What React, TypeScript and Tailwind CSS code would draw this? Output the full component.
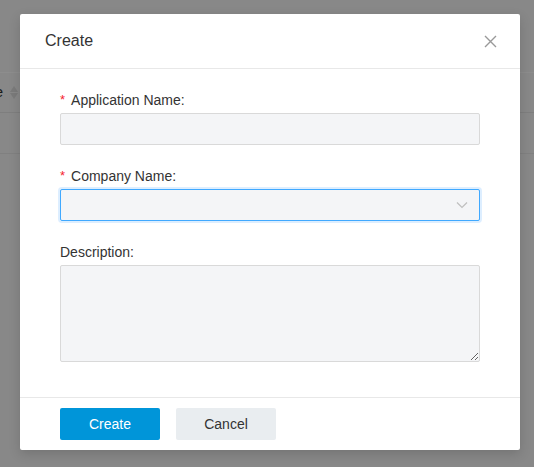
import React from 'react';

function ChevronDown() {
  return (
    <svg width="12" height="8" viewBox="0 0 12 8" fill="none" className="text-[#bfbfbf]">
      <path d="M1 1.5 L6 6.5 L11 1.5" stroke="currentColor" strokeWidth="1.2" />
    </svg>
  );
}

function CloseIcon() {
  return (
    <svg width="13" height="13" viewBox="0 0 13 13" fill="none" className="text-[#999]">
      <path d="M1 1 L12 12 M12 1 L1 12" stroke="currentColor" strokeWidth="1.4" />
    </svg>
  );
}

function Label({ text, required }: { text: string; required?: boolean }) {
  return (
    <div className="h-5 leading-5 text-[14px] text-[#333] flex items-center">
      {required && <span className="text-[#f5222d] mr-[6px] text-[13px] leading-5">*</span>}
      <span>{text}</span>
    </div>
  );
}

export default function App() {
  return (
    <div
      className="relative w-[534px] h-[467px] overflow-hidden bg-[#888]"
      style={{ fontFamily: '"Liberation Sans", Arial, sans-serif' }}
    >
      {/* page behind the mask */}
      <div className="absolute inset-0">
        <div className="h-[73px] border-b border-[#8d8d8d]" />
        <div className="h-[40px] border-b border-[#7e7e7e] flex items-center">
          <span className="ml-[-37px] text-[15px] text-[#1a1a1a]">Name</span>
          <span className="ml-[7px] flex flex-col gap-[1px]">
            <svg width="8" height="6" viewBox="0 0 8 6"><path d="M0 6 L4 0 L8 6Z" fill="#7a7a7a" /></svg>
            <svg width="8" height="6" viewBox="0 0 8 6"><path d="M0 0 L4 6 L8 0Z" fill="#7a7a7a" /></svg>
          </span>
        </div>
        <div className="h-[41px] border-b border-[#808080]" />
      </div>

      {/* modal */}
      <div className="absolute left-[20px] top-[14px] w-[500px] bg-white rounded-[2px] shadow-[0_4px_12px_rgba(0,0,0,0.15)]">
        <div className="h-[55px] border-b border-[#e8e8e8] flex items-center justify-between pl-[25px] pr-[23px]">
          <span className="text-[16px] text-[#333]">Create</span>
          <CloseIcon />
        </div>

        <div className="px-[40px] pt-[21px] pb-[35px]">
          <Label text="Application Name:" required />
          <input className="mt-[3px] block w-full h-8 bg-[#f4f5f7] border border-[#d9d9d9] rounded-[2px] outline-none px-2 text-[14px]" />

          <div className="mt-[21px]">
            <Label text="Company Name:" required />
          </div>
          <div className="mt-[3px] h-8 w-full bg-[#f4f5f7] border border-[#40a9ff] rounded-[2px] shadow-[0_0_0_2px_rgba(24,144,255,0.15)] flex items-center justify-end pr-[11px]">
            <ChevronDown />
          </div>

          <div className="mt-[21px]">
            <Label text="Description:" />
          </div>
          <textarea className="mt-[3px] block w-full h-[97px] bg-[#f4f5f7] border border-[#d9d9d9] rounded-[2px] outline-none px-2 text-[14px]" />
        </div>

        <div className="border-t border-[#e8e8e8] px-[40px] py-[10px] flex gap-4">
          <button className="w-[100px] h-8 bg-[#0095d9] text-white text-[14px] rounded-[2px]">Create</button>
          <button className="w-[100px] h-8 bg-[#e9edf0] text-[#333] text-[14px] rounded-[2px]">Cancel</button>
        </div>
      </div>
    </div>
  );
}
